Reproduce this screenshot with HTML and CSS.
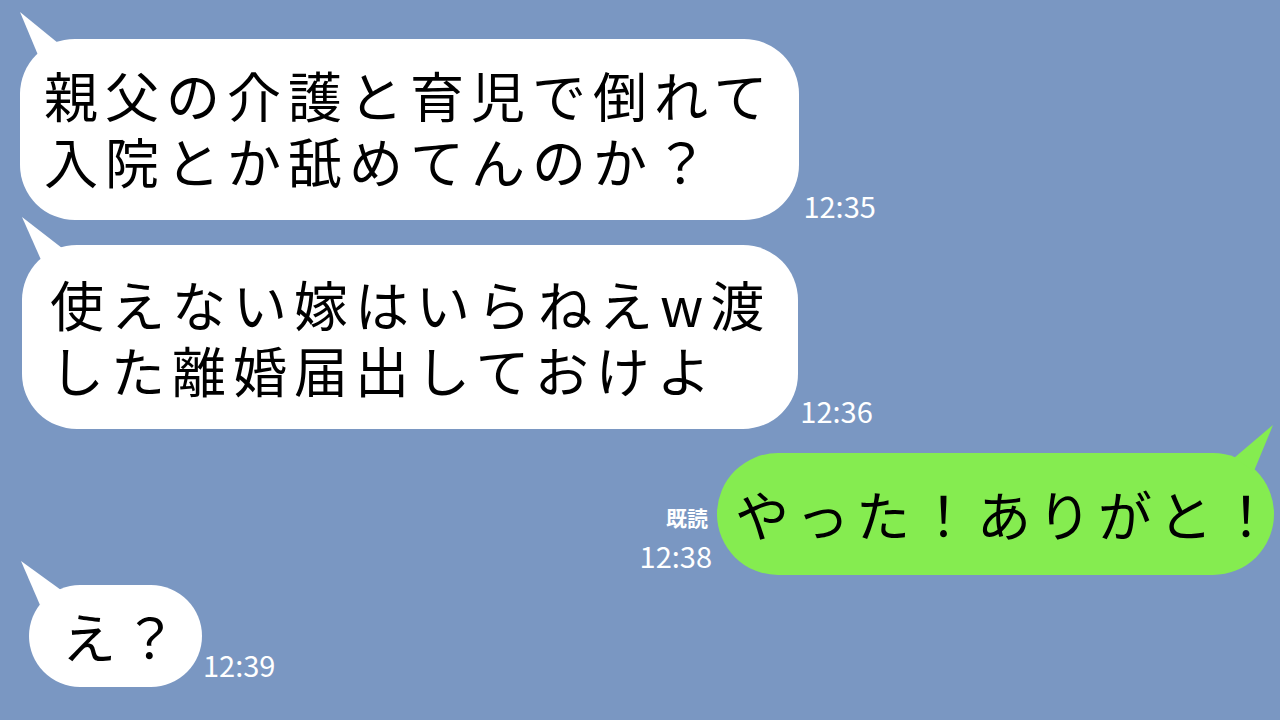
FILE: index.html
```html
<!DOCTYPE html>
<html lang="ja">
<head>
    <meta charset="UTF-8">
    <title>トーク</title>
    <link rel="stylesheet" href="styles.css">
</head>
<body>
<div class="chat">
    <div class="row r1">
        <div class="bubble b1">
            <svg class="tail tail-l" viewBox="0 0 60 60"><polygon points="10,3 48,34 28,46"/></svg>
            <p>親父の介護と育児で倒れて<br>入院とか舐めてんのか？</p>
        </div>
        <span class="time t1">12:35</span>
    </div>
    <div class="row r2">
        <div class="bubble b2">
            <svg class="tail tail-l" viewBox="0 0 60 60"><polygon points="10,2 50,33 30,47"/></svg>
            <p>使えない嫁はいらねえw渡<br>した離婚届出しておけよ</p>
        </div>
        <span class="time t2">12:36</span>
    </div>
    <div class="row r3">
        <div class="meta">
            <span class="read">既読</span>
            <span class="time">12:38</span>
        </div>
        <div class="bubble me">
            <svg class="tail tail-r" viewBox="0 0 60 60"><polygon points="49,2 10,35 30,48"/></svg>
            <p>やった！ありがと！</p>
        </div>
    </div>
    <div class="row r4">
        <div class="bubble b4">
            <svg class="tail tail-l" viewBox="0 0 60 60"><polygon points="2,6 42,35 21,50"/></svg>
            <p>え？</p>
        </div>
        <span class="time t4">12:39</span>
    </div>
</div>
</body>
</html>
```

FILE: styles.css
```css
* {
    margin: 0;
    padding: 0;
}

body {
    width: 1280px;
    height: 720px;
    overflow: hidden;
    background: #7a97c2;
    font-family: "Noto Sans CJK JP", "Noto Sans", sans-serif;
}

.chat {
    display: flex;
    flex-direction: column;
    padding-top: 39px;
}

.row {
    display: flex;
    align-items: flex-end;
}

.r1 {
    margin-left: 20px;
}

.r2 {
    margin-top: 25px;
    margin-left: 22px;
}

.r3 {
    margin-top: 24px;
    margin-right: 6px;
    justify-content: flex-end;
}

.r4 {
    margin-top: 10px;
    margin-left: 29px;
}

.bubble {
    position: relative;
    background: #fff;
    color: #000;
    font-size: 54px;
    line-height: 66px;
    letter-spacing: 7px;
    white-space: nowrap;
}

.bubble p {
    position: relative;
}

.tail {
    position: absolute;
    top: -30px;
    width: 60px;
    height: 60px;
    fill: #fff;
}

.tail-l {
    left: -10px;
}

.tail-r {
    right: -10px;
}

.b1 {
    border-radius: 55px;
    padding: 23px 25px 26px 24px;
}

.b2 {
    border-radius: 55px;
    padding: 26px 27px 26px 28px;
}

.me {
    background: #85ec50;
    border-radius: 61px;
    letter-spacing: 6.5px;
    padding: 28px 1px 28px 18px;
}

.me p {
    margin-right: -6.5px;
}

.me .tail {
    fill: #85ec50;
}

.b4 {
    border-radius: 51px;
    padding: 18px 18px 18px 33px;
}

.time {
    color: #fff;
    font-size: 29px;
    line-height: 29px;
}

.t1 {
    margin-left: 4px;
}

.t2 {
    margin-left: 2px;
    margin-bottom: 4px;
}

.t4 {
    margin-left: 1px;
    margin-bottom: 8px;
}

.meta {
    display: flex;
    flex-direction: column;
    align-items: flex-end;
    margin-right: 5px;
    margin-bottom: 5px;
}

.read {
    color: #fff;
    font-size: 21px;
    font-weight: 700;
    line-height: 21px;
    margin-right: 4px;
    margin-bottom: 13px;
}
```
